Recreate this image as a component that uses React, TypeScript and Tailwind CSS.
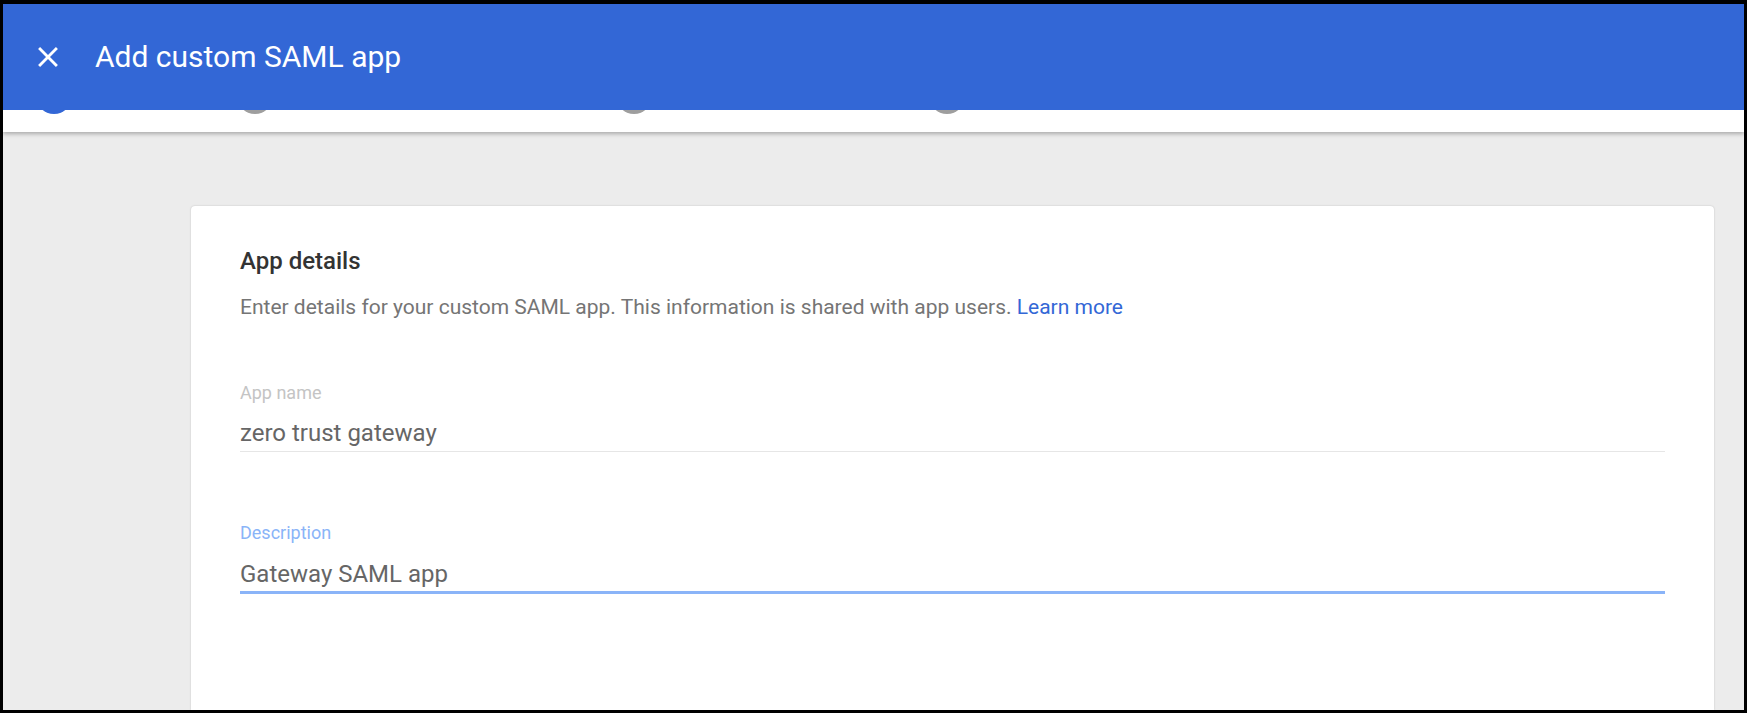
import React from 'react';

const CloseIcon: React.FC = () => (
  <svg width="34" height="34" viewBox="0 0 24 24" fill="#ffffff">
    <path d="M19 6.41L17.59 5 12 10.59 6.41 5 5 6.41 10.59 12 5 17.59 6.41 19 12 13.41 17.59 19 19 17.59 13.41 12z" />
  </svg>
);

const StepDot: React.FC<{ active?: boolean; className?: string }> = ({ active, className }) => (
  <div className={`h-[4px] w-[36px] overflow-hidden ${className ?? ''}`}>
    <div
      className={`-mt-[32px] h-[36px] w-[36px] rounded-full ${active ? 'bg-[#3367d6]' : 'bg-[#9e9e9e]'}`}
    />
  </div>
);

const App: React.FC = () => {
  return (
    <div className="flex h-[713px] w-full flex-col bg-black px-[3px] pb-[3px] pt-[4px] font-['Roboto',sans-serif]">
      <div className="flex flex-1 flex-col overflow-hidden bg-[#ececec]">
        <header className="relative z-20 flex h-[106px] shrink-0 items-center bg-[#3367d6] text-white">
          <button className="ml-[28px] flex items-center">
            <CloseIcon />
          </button>
          <h1 className="ml-[30px] text-[30px] font-normal leading-none">Add custom SAML app</h1>
        </header>

        {/* stepper, scrolled under the header */}
        <div className="relative z-10 flex h-[22px] shrink-0 items-start bg-white shadow-[0_2px_4px_rgba(0,0,0,0.28)]">
          <StepDot active className="ml-[33px]" />
          <StepDot className="ml-[165px]" />
          <StepDot className="ml-[343px]" />
          <StepDot className="ml-[277px]" />
        </div>

        <div className="flex-1 pl-[188px] pr-[30px] pt-[74px]">
          <div className="h-full rounded-t-[4px] bg-white px-[49px] pt-[39px] shadow-[0_0_2px_rgba(0,0,0,0.2)]">
            <h2 className="text-[24px] font-medium leading-[32px] text-[#333333]">App details</h2>
            <p className="mt-[16px] text-[21px] leading-[28px] text-[#757575]">
              Enter details for your custom SAML app. This information is shared with app users.{' '}
              <a className="text-[#3367d6]">Learn more</a>
            </p>

            <div className="mt-[60px]">
              <label className="block text-[18px] leading-[24px] text-[#c4c4c4]">App name</label>
              <div className="mt-[13px] border-b border-[#e6e6e6] pb-[3px] text-[24px] leading-[30px] text-[#666666]">
                zero trust gateway
              </div>
            </div>

            <div className="mt-[69px]">
              <label className="block text-[18px] leading-[24px] text-[#8ab4f8]">Description</label>
              <div className="mt-[14px] border-b-[3px] border-[#8ab4f8] pb-[2px] text-[24px] leading-[30px] text-[#666666]">
                Gateway SAML app
              </div>
            </div>
          </div>
        </div>
      </div>
    </div>
  );
};

export default App;
